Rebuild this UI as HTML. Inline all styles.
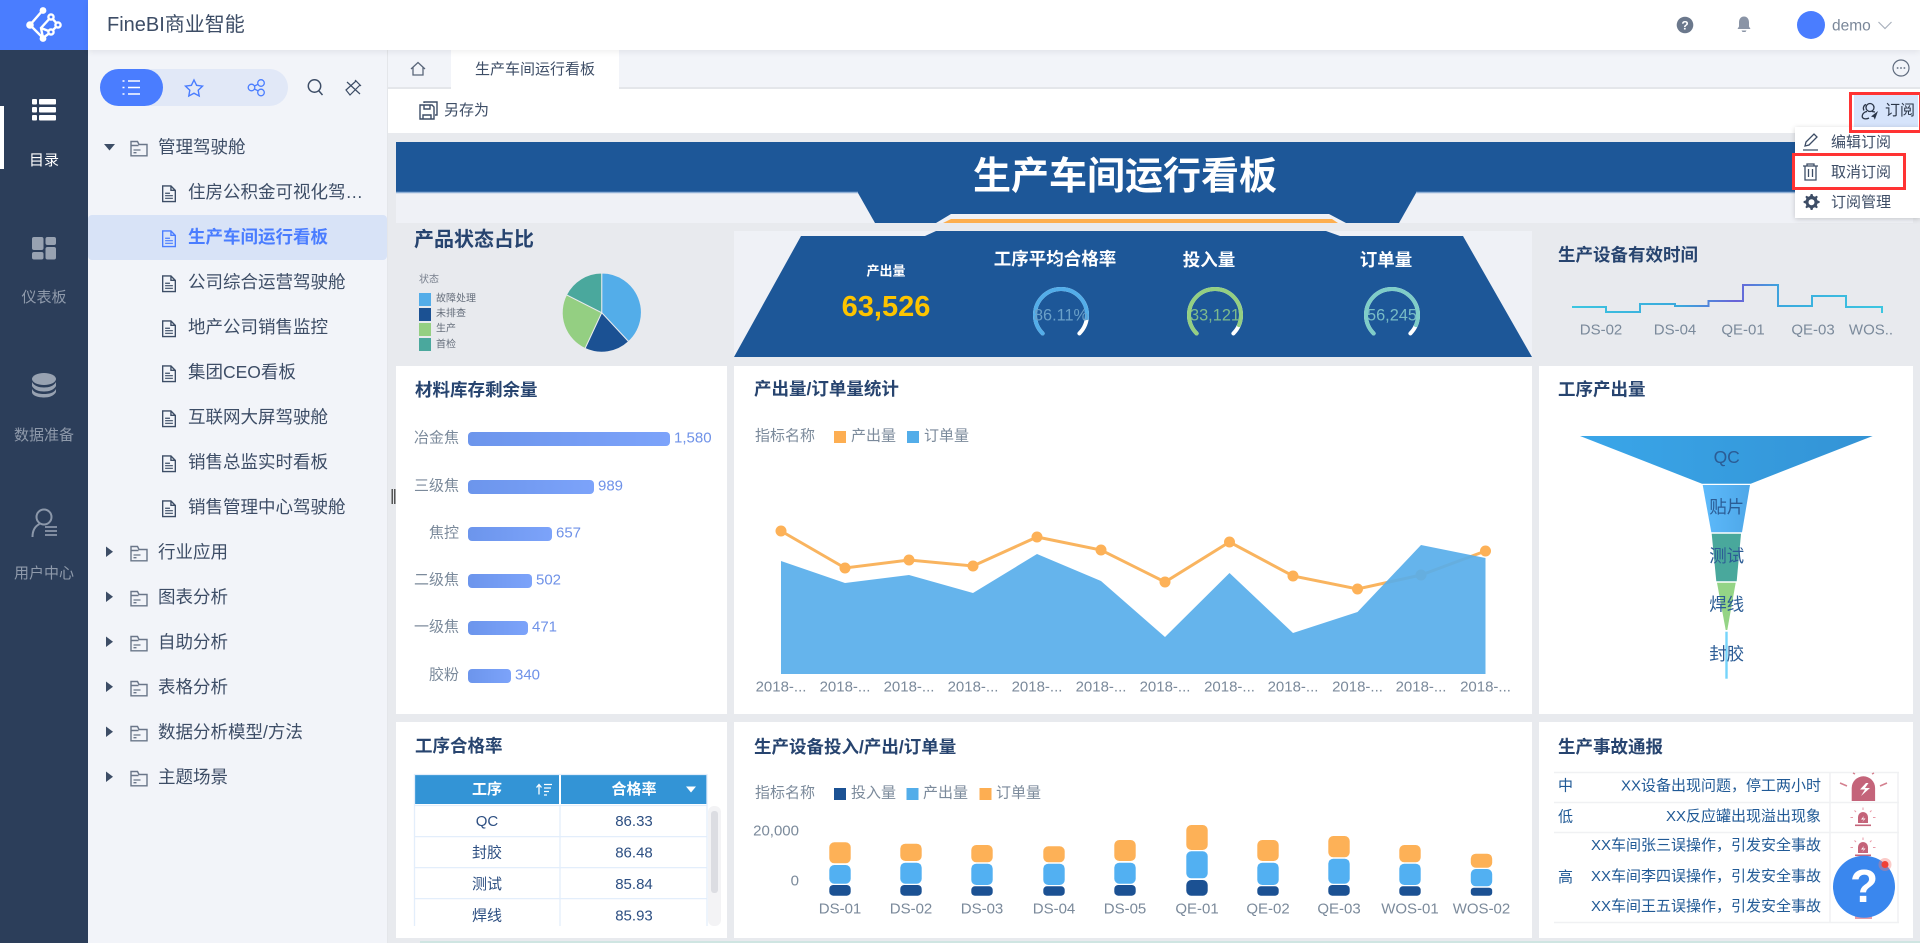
<!DOCTYPE html>
<html lang="zh-CN"><head><meta charset="utf-8"><title>FineBI商业智能</title>
<style>
*{box-sizing:border-box;margin:0;padding:0}
html,body{width:1920px;height:943px;overflow:hidden;background:#e8eaee;font-family:"Liberation Sans","Noto Sans CJK SC",sans-serif;color:#3d4d66}
.a{position:absolute}
.rail{left:0;top:0;width:88px;height:943px;background:#2c3e5a}
.logo{left:0;top:0;width:88px;height:50px;background:#4a7dff}
.rl{left:0;width:88px;text-align:center;font-size:15px;line-height:20px;color:#8f9aab;margin-top:1px}
.head{left:88px;top:0;width:1832px;height:50px;background:#fff;box-shadow:0 2px 6px rgba(0,0,0,.07);z-index:3}
.side{left:88px;top:50px;width:300px;height:893px;background:#f2f4f9;border-right:1px solid #e4e6ea}
.r{position:absolute;left:188px;height:45px;line-height:45px;font-size:17.5px;white-space:nowrap;color:#3d4d66}
.f{left:158px;margin-top:1px}
.tabs{left:388px;top:50px;width:1532px;height:39px;background:#f2f4f9;border-bottom:2px solid #e4e6ea}
.tab{left:451px;top:50px;width:168px;height:39px;background:#fff;text-align:center;line-height:40px;font-size:15px;color:#3d4d66}
.tool{left:388px;top:89px;width:1532px;height:44px;background:#fff}
.p{background:#fff}
.menu{left:1795px;top:127px;width:125px;height:91px;background:#fff;box-shadow:0 1px 5px rgba(0,0,0,.18);z-index:5}
.mi{position:absolute;left:1831px;font-size:15px;line-height:20px;color:#3d4d66;z-index:6;margin-top:1px}
text{dominant-baseline:central}
.t{font-size:17.5px;font-weight:700;fill:#27446f}
.g{font-size:15px;fill:#7b8a9b}
.v{font-size:15px;fill:#6f92e8}
.c{font-size:15px;fill:#2d4f82;text-anchor:middle}
.n{font-size:15px;fill:#215a96}
.e{text-anchor:end}.m{text-anchor:middle}
</style></head><body>

<div class="a rail"></div>
<div class="a logo"></div>
<svg class="a" style="left:0;top:0;z-index:2" width="88" height="50" viewBox="0 0 88 50">
<g fill="none" stroke="#fff" stroke-width="2.400"><path d="M43 10 30 25 43 38 51 32 58 25 51 17 41 28 43 38M41 28 51 32"/><circle cx="51" cy="17" r="2.600" fill="#4a7dff"/><circle cx="58" cy="25" r="2.600" fill="#4a7dff"/><circle cx="51" cy="32" r="2.600" fill="#4a7dff"/></g>
<g fill="#fff"><circle cx="43" cy="10.500" r="3.400"/><circle cx="30" cy="25" r="3.800"/><circle cx="43" cy="38.500" r="3.400"/></g></svg>
<div class="a" style="left:0;top:106px;width:4px;height:63px;background:#fff"></div>
<svg class="a" style="left:0;top:90px" width="88" height="460" viewBox="0 90 88 460">
<g fill="#fff"><rect x="32" y="99" width="5" height="5.500" rx="1"/><rect x="39" y="99" width="17" height="5.500" rx="1"/><rect x="32" y="107" width="5" height="5.500" rx="1"/><rect x="39" y="107" width="17" height="5.500" rx="1"/><rect x="32" y="115" width="5" height="5.500" rx="1"/><rect x="39" y="115" width="17" height="5.500" rx="1"/></g>
<g fill="#98a2b1"><rect x="32" y="237" width="11.500" height="13" rx="2"/><rect x="45.500" y="237" width="10.500" height="8" rx="2"/><rect x="32" y="252" width="11.500" height="7.500" rx="2"/><rect x="45.500" y="247" width="10.500" height="12.500" rx="2"/>
<ellipse cx="44" cy="379" rx="12" ry="6"/><path d="M32 382c2 4 7 5.500 12 5.500s10-1.500 12-5.500v4c-2 4-7 5.500-12 5.500s-10-1.500-12-5.500zM32 389c2 4 7 5 12 5s10-1 12-5v3c-2 4-7 5.500-12 5.500s-12-1.500-12-5.500z"/></g>
<g fill="none" stroke="#8c98aa" stroke-width="2"><circle cx="44" cy="517" r="7.500"/><path d="M32.500 537c0-7 3-11 7-13"/><path d="M45 527h12M45 531h12M45 535h12" stroke-width="1.800"/></g>
</svg>
<div class="a rl" style="top:150px;color:#fff">目录</div>
<div class="a rl" style="top:287px">仪表板</div>
<div class="a rl" style="top:425px">数据准备</div>
<div class="a rl" style="top:563px">用户中心</div>

<div class="a head"></div>
<div class="a" style="left:107px;top:10px;font-size:20px;line-height:30px;color:#3d4d66;z-index:4">FineBI商业智能</div>
<svg class="a" style="left:1660px;top:0;z-index:4" width="260" height="50" viewBox="1660 0 260 50">
<circle cx="1685" cy="25" r="8.300" fill="#6b788c"/><text x="1685" y="25.500" font-size="12" font-weight="700" fill="#fff" text-anchor="middle">?</text>
<path d="M1744 16.500c-3.500 0-5 3-5 6v4l-1.500 2.500h13L1749 26.500v-4c0-3-1.500-6-5-6zM1741.500 30.500h5l-1 1.500h-3z" fill="#8a94a6"/>
<circle cx="1811" cy="25" r="14" fill="#4a7dff"/>
<text x="1832" y="26" font-size="15.500" fill="#7a8799">demo</text>
<path d="M1878.500 22 1885 28.500 1891.500 22" fill="none" stroke="#a9b1bd" stroke-width="1.200"/></svg>

<div class="a side"></div>
<div class="a" style="left:100px;top:69px;width:188px;height:37px;border-radius:19px;background:#e1e8f7"></div>
<div class="a" style="left:100px;top:69px;width:63px;height:37px;border-radius:19px;background:#4a7dff"></div>
<svg class="a" style="left:100px;top:69px" width="270" height="37" viewBox="100 69 270 37">
<g fill="none" stroke="#fff" stroke-width="1.500"><path d="M128 81h12M128 87.500h12M128 94h12"/><path d="M122.500 81h2M122.500 87.500h2M122.500 94h2"/></g>
<path d="M194 80l2.600 5.300 5.900.8-4.300 4.100 1 5.800-5.200-2.800-5.200 2.800 1-5.800-4.300-4.100 5.900-.8z" fill="none" stroke="#4a7dff" stroke-width="1.400"/>
<g fill="none" stroke="#4a7dff" stroke-width="1.300"><circle cx="251.500" cy="87.500" r="3.300"/><circle cx="261" cy="83" r="3.300"/><circle cx="261" cy="92.500" r="3.300"/><path d="M254.500 86l3.500-1.700M254.500 89l3.500 1.800"/></g>
<g fill="none" stroke="#3d4d66" stroke-width="1.500"><circle cx="314.500" cy="86" r="6.200"/><path d="M319 91l3.500 4"/></g>
<g fill="none" stroke="#3d4d66" stroke-width="1.200"><path d="M346 90 356 81l4 4-10 10zM355 80l6 6M347 82l13 12"/></g>
</svg>

<svg width="0" height="0" style="position:absolute"><defs>
<symbol id="doc" viewBox="0 0 15 18"><path d="M1 1h8.500L14 5.500V17H1z M9.500 1v4.500H14" fill="none" stroke="currentColor" stroke-width="1.400"/><path d="M3.500 8.500h5M3.500 11h8M3.500 13.700h8" fill="none" stroke="currentColor" stroke-width="1.200"/></symbol>
<symbol id="fold" viewBox="0 0 18 17"><path d="M1 15.800V1.500h6.500l1.500 3h8v11.300z M1 5.500h7.500" fill="none" stroke="#6a7689" stroke-width="1.400"/><path d="M3.500 10h7M3.500 12.700h3" fill="none" stroke="#6a7689" stroke-width="1.300"/></symbol>
</defs></svg>

<div class="a" style="left:88px;top:215px;width:299px;height:45px;background:#d8e3f7;border-radius:4px"></div>
<svg class="a" style="left:100px;top:135px;color:#3d4d66" width="90" height="660" viewBox="100 135 90 660">
<path d="M104 144h11l-5.500 6.500z" fill="#3d4d66"/>
<g fill="#3d4d66"><path d="M106 546.500v10.500l7-5.200z"/><path d="M106 591.500v10.500l7-5.200z"/><path d="M106 636.500v10.500l7-5.200z"/><path d="M106 681.500v10.500l7-5.200z"/><path d="M106 726.500v10.500l7-5.200z"/><path d="M106 771.500v10.500l7-5.200z"/></g>
<use href="#fold" x="130" y="140" width="18" height="17"/><use href="#fold" x="130" y="545" width="18" height="17"/><use href="#fold" x="130" y="590" width="18" height="17"/><use href="#fold" x="130" y="635" width="18" height="17"/><use href="#fold" x="130" y="680" width="18" height="17"/><use href="#fold" x="130" y="725" width="18" height="17"/><use href="#fold" x="130" y="770" width="18" height="17"/>
<use href="#doc" x="161.500" y="185" width="15" height="17.500"/>
<use href="#doc" x="161.500" y="230" width="15" height="17.500" style="color:#4a7dff"/>
<use href="#doc" x="161.500" y="275" width="15" height="17.500"/>
<use href="#doc" x="161.500" y="320" width="15" height="17.500"/>
<use href="#doc" x="161.500" y="365" width="15" height="17.500"/>
<use href="#doc" x="161.500" y="410" width="15" height="17.500"/>
<use href="#doc" x="161.500" y="455" width="15" height="17.500"/>
<use href="#doc" x="161.500" y="500" width="15" height="17.500"/>
</svg>
<div class="r f" style="top:124px">管理驾驶舱</div>
<div class="r" style="top:170px">住房公积金可视化驾…</div>
<div class="r" style="top:215px;color:#4a7dff;font-weight:700">生产车间运行看板</div>
<div class="r" style="top:260px">公司综合运营驾驶舱</div>
<div class="r" style="top:305px">地产公司销售监控</div>
<div class="r" style="top:350px">集团CEO看板</div>
<div class="r" style="top:395px">互联网大屏驾驶舱</div>
<div class="r" style="top:440px">销售总监实时看板</div>
<div class="r" style="top:485px">销售管理中心驾驶舱</div>
<div class="r f" style="top:529px">行业应用</div>
<div class="r f" style="top:574px">图表分析</div>
<div class="r f" style="top:619px">自助分析</div>
<div class="r f" style="top:664px">表格分析</div>
<div class="r f" style="top:709px">数据分析模型/方法</div>
<div class="r f" style="top:754px">主题场景</div>

<div class="a tabs"></div>
<div class="a tab">生产车间运行看板</div>
<div class="a tool"></div>
<svg class="a" style="left:400px;top:55px" width="100" height="75" viewBox="400 55 100 75">
<path d="M411 69l7-6.500 7 6.500M413 67.500V75h10v-7.500" fill="none" stroke="#5a667a" stroke-width="1.300"/>
<path d="M424 103v-1h13v13h-2M420 105h12l2 2v12h-14zM424 105v4h6v-4M423 119v-4h8v4" fill="none" stroke="#3d4d66" stroke-width="1.400"/></svg>
<div class="a" style="left:444px;top:101px;font-size:15px;line-height:20px;color:#3d4d66">另存为</div>
<svg class="a" style="left:1890px;top:55px" width="24" height="26" viewBox="1890 55 24 26"><circle cx="1901" cy="68" r="8" fill="none" stroke="#5f6b7e" stroke-width="1.200"/><path d="M1896.800 68h1.600M1900.200 68h1.600M1903.600 68h1.600" stroke="#5f6b7e" stroke-width="1.600"/></svg>

<div class="a p" style="left:396px;top:366px;width:331px;height:348px"></div>
<div class="a p" style="left:734px;top:366px;width:798px;height:348px"></div>
<div class="a p" style="left:1539px;top:366px;width:374px;height:348px"></div>
<div class="a p" style="left:396px;top:722px;width:331px;height:216px"></div>
<div class="a p" style="left:734px;top:722px;width:798px;height:216px"></div>
<div class="a p" style="left:1539px;top:722px;width:374px;height:216px"></div>
<div class="a" style="left:420px;top:941px;width:1500px;height:2px;background:#cfe5e2"></div>

<svg class="a" style="left:0;top:0;font-family:'Liberation Sans','Noto Sans CJK SC',sans-serif" width="1920" height="943" viewBox="0 0 1920 943">
<defs>
<linearGradient id="bar"><stop offset="0" stop-color="#6c95ec"/><stop offset="1" stop-color="#7ca3fa"/></linearGradient>
<linearGradient id="step" gradientUnits="userSpaceOnUse" x1="1572" x2="1882" y1="0" y2="0"><stop offset="0" stop-color="#3cc6e0"/><stop offset=".35" stop-color="#3aa8dc"/><stop offset=".53" stop-color="#6a62d8"/><stop offset=".68" stop-color="#3aaade"/><stop offset="1" stop-color="#3cc6e0"/></linearGradient>
<linearGradient id="fq"><stop offset="0" stop-color="#3aa6e9"/><stop offset="1" stop-color="#3393d5"/></linearGradient>
<linearGradient id="fb"><stop offset="0" stop-color="#5dbafb"/><stop offset="1" stop-color="#4ea7e8"/></linearGradient>
<g id="alarm"><path d="M-5-2a5 5 0 0 1 10 0v6h-10z" fill="#c4647a"/><path d="M1-3-2 .5H1L-1 3.500 2.500-.5H0z" fill="#fff"/><rect x="-8" y="5.500" width="16" height="1.600" fill="#c4647a"/><path d="M-10-1.500h-2.500M10-1.500h2.500M-7-7l-1.500-1.500M7-7l1.500-1.500M0-9v-2.500" stroke="#e89aa8" fill="none"/></g>
</defs>

<!-- banner -->
<rect x="396" y="142" width="1517" height="51" fill="#1d5798"/>
<rect x="396" y="193" width="1517" height="30" fill="#eff1f6"/>
<path d="M396 192.500H858M1416 192.500H1913" stroke="#8fb0d6" stroke-width="1.500"/>
<path d="M858 193 875 223H1399L1416 193z" fill="#1d5798"/>
<path d="M936 223 951 214H1329L1346 223z" fill="#eff1f6"/>
<path d="M943 223 951 219H1332L1338 223z" fill="#fdae4e"/>
<text x="1125" y="177" font-size="38" font-weight="700" fill="#fff" text-anchor="middle">生产车间运行看板</text>

<!-- pie panel -->
<text x="414" y="240" font-size="20" font-weight="700" fill="#27446f">产品状态占比</text>
<text x="419" y="280" font-size="10" fill="#777f8c">状态</text>
<rect x="419" y="293" width="12" height="13" fill="#53ade9"/><rect x="419" y="308" width="12" height="13" fill="#1b5193"/><rect x="419" y="323" width="12" height="13" fill="#94cf82"/><rect x="419" y="338" width="12" height="13" fill="#4aa89d"/>
<g font-size="10" fill="#666f7c"><text x="436" y="299">故障处理</text><text x="436" y="314">未排查</text><text x="436" y="329">生产</text><text x="436" y="345">首检</text></g>
<g stroke="#e8eaee" stroke-width="1">
<path d="M601.700 312.700V273A39.500 39.500 0 0 1 628.600 341.600z" fill="#53ade9"/>
<path d="M601.700 312.700 628.600 341.600A39.500 39.500 0 0 1 585 348.500z" fill="#1b5193"/>
<path d="M601.700 312.700 585 348.500A39.500 39.500 0 0 1 566.500 294.800z" fill="#94cf82"/>
<path d="M601.700 312.700 566.500 294.800A39.500 39.500 0 0 1 601.700 273z" fill="#4aa89d"/></g>

<!-- KPI -->
<rect x="734" y="231" width="798" height="126" fill="#eff1f6"/>
<path d="M801 236H925L936 231H1326L1340 236H1463L1532 357H734z" fill="#1d5798"/>
<g fill="#fff" text-anchor="middle" font-weight="700">
<text x="886" y="271" font-size="13">产出量</text>
<text x="1055" y="259" font-size="17.500">工序平均合格率</text>
<text x="1209" y="260" font-size="17.500">投入量</text>
<text x="1386" y="260" font-size="17.500">订单量</text></g>
<text x="886" y="307" font-size="29" font-weight="700" fill="#fdc400" text-anchor="middle">63,526</text>
<g fill="none" stroke-width="4" stroke-linecap="round">
<path d="M1042.600 333.400A26 26 0 1 1 1079.400 333.400" stroke="#fff"/><path d="M1042.600 333.400A26 26 0 1 1 1079.400 333.400" stroke="#53ade9" pathLength="100" stroke-dasharray="86 100"/>
<path d="M1196.600 333.400A26 26 0 1 1 1233.400 333.400" stroke="#fff"/><path d="M1196.600 333.400A26 26 0 1 1 1233.400 333.400" stroke="#94cf82" pathLength="100" stroke-dasharray="92 100"/>
<path d="M1373.600 333.400A26 26 0 1 1 1410.400 333.400" stroke="#fff"/><path d="M1373.600 333.400A26 26 0 1 1 1410.400 333.400" stroke="#7fcdc8" pathLength="100" stroke-dasharray="92 100"/></g>
<g font-size="17" text-anchor="middle"><text x="1061" y="315" fill="#6aa0c8" textLength="54" lengthAdjust="spacingAndGlyphs">86.11%</text><text x="1215" y="315" fill="#7dba8c" textLength="50" lengthAdjust="spacingAndGlyphs">33,121</text><text x="1392" y="315" fill="#78bcc6" textLength="50" lengthAdjust="spacingAndGlyphs">56,245</text></g>

<!-- step -->
<text class="t" x="1558" y="255">生产设备有效时间</text>
<path d="M1572 307H1606V312H1640V304H1675V306H1708.500V301H1743V285H1778V306H1812V296H1846V307H1882V313" fill="none" stroke="url(#step)" stroke-width="2"/>
<g><text class="g m" x="1601" y="330">DS-02</text><text class="g m" x="1675" y="330">DS-04</text><text class="g m" x="1743" y="330">QE-01</text><text class="g m" x="1813" y="330">QE-03</text><text class="g m" x="1871" y="330">WOS..</text></g>

<!-- bars -->
<text class="t" x="415" y="390">材料库存剩余量</text>
<g fill="url(#bar)"><rect x="468" y="432" width="202" height="14" rx="4"/><rect x="468" y="480" width="126" height="14" rx="4"/><rect x="468" y="527" width="84" height="14" rx="4"/><rect x="468" y="574" width="64" height="14" rx="4"/><rect x="468" y="621" width="60" height="14" rx="4"/><rect x="468" y="669" width="43" height="14" rx="4"/></g>
<text class="g e" x="459" y="438">冶金焦</text><text class="g e" x="459" y="486">三级焦</text><text class="g e" x="459" y="533">焦控</text><text class="g e" x="459" y="580">二级焦</text><text class="g e" x="459" y="627">一级焦</text><text class="g e" x="459" y="675">胶粉</text>
<text class="v" x="674" y="438">1,580</text><text class="v" x="598" y="486">989</text><text class="v" x="556" y="533">657</text><text class="v" x="536" y="580">502</text><text class="v" x="532" y="627">471</text><text class="v" x="515" y="675">340</text>

<!-- line/area -->
<text class="t" x="754" y="389">产出量/订单量统计</text>
<text class="g" x="755" y="436">指标名称</text>
<rect x="834" y="431" width="12" height="12" fill="#fdae52"/><text class="g" x="851" y="436">产出量</text>
<rect x="907" y="431" width="12" height="12" fill="#53ade9"/><text class="g" x="924" y="436">订单量</text>
<path d="M781 531 845 568 909 560 973 566 1037 537 1101 550 1165 582 1229.500 542 1293 576 1357.500 589 1421 575 1485.500 551" fill="none" stroke="#f9b45f" stroke-width="3"/>
<g fill="#fdb157"><circle cx="781" cy="531" r="5.500"/><circle cx="845" cy="568" r="5.500"/><circle cx="909" cy="560" r="5.500"/><circle cx="973" cy="566" r="5.500"/><circle cx="1037" cy="537" r="5.500"/><circle cx="1101" cy="550" r="5.500"/><circle cx="1165" cy="582" r="5.500"/><circle cx="1229.500" cy="542" r="5.500"/><circle cx="1293" cy="576" r="5.500"/><circle cx="1357.500" cy="589" r="5.500"/><circle cx="1421" cy="575" r="5.500"/><circle cx="1485.500" cy="551" r="5.500"/></g>
<path d="M781 561 845 583 909 575 973 593 1037 554 1101 581 1165 637 1229.500 573 1293 633 1357.500 612 1421 545 1485.500 558V674H781z" fill="#58aeea" fill-opacity=".92"/>
<g><text class="g m" x="781" y="687">2018-...</text><text class="g m" x="845" y="687">2018-...</text><text class="g m" x="909" y="687">2018-...</text><text class="g m" x="973" y="687">2018-...</text><text class="g m" x="1037" y="687">2018-...</text><text class="g m" x="1101" y="687">2018-...</text><text class="g m" x="1165" y="687">2018-...</text><text class="g m" x="1229.500" y="687">2018-...</text><text class="g m" x="1293" y="687">2018-...</text><text class="g m" x="1357.500" y="687">2018-...</text><text class="g m" x="1421" y="687">2018-...</text><text class="g m" x="1485.500" y="687">2018-...</text></g>

<!-- funnel -->
<text class="t" x="1558" y="389.500">工序产出量</text>
<path d="M1580 436H1872.700L1750.700 483.700H1702z" fill="url(#fq)"/>
<path d="M1702.700 485H1750L1742 532.300H1711.300z" fill="url(#fb)"/>
<path d="M1711.700 533.700H1741L1736.700 581.300H1716.300z" fill="#49a89c"/>
<path d="M1717 582.700H1735.700L1727.300 630H1725.700z" fill="#94d486"/>
<path d="M1725.300 631.700H1727.700V678.700H1725.300z" fill="#75d4fb"/>
<g font-size="17.500" fill="#2b5c95" text-anchor="middle"><text x="1726.700" y="457">QC</text><text x="1726.700" y="507">贴片</text><text x="1726.700" y="556">测试</text><text x="1726.700" y="604.700">焊线</text><text x="1726.700" y="654">封胶</text></g>

<!-- table -->
<text class="t" x="415" y="746">工序合格率</text>
<rect x="415" y="775" width="144" height="29" fill="#3394d6"/><rect x="561" y="775" width="146" height="29" fill="#3394d6"/>
<g font-size="15" font-weight="700" fill="#fff" text-anchor="middle"><text x="487" y="789.500">工序</text><text x="634" y="789.500">合格率</text></g>
<path d="M539 784.500v10M536.500 787.500l2.500-3 2.500 3M544 784.500h8M544 788h7M544 791.500h5M544 795h3" stroke="#fff" stroke-width="1.300" fill="none"/>
<path d="M686 786.500h10l-5 6z" fill="#fff"/>
<g stroke="#e3eefb" stroke-width="1.300" fill="none"><path d="M414.500 774V926M560 805V926M707 774V926M414 774.500H707M414 805.500H707M414 836.600H707M414 867.600H707M414 898.600H707"/></g>
<text class="c" x="487" y="821.500">QC</text><text class="c" x="634" y="821.500">86.33</text>
<text class="c" x="487" y="853">封胶</text><text class="c" x="634" y="853">86.48</text>
<text class="c" x="487" y="884.500">测试</text><text class="c" x="634" y="884.500">85.84</text>
<text class="c" x="487" y="916">焊线</text><text class="c" x="634" y="916">85.93</text>
<rect x="708" y="806" width="13" height="120" rx="6" fill="#f3f3f5"/><rect x="711" y="811" width="7" height="82" rx="3" fill="#dcdde2"/>

<!-- stacked -->
<text class="t" x="754" y="747">生产设备投入/产出/订单量</text>
<text class="g" x="755" y="793">指标名称</text>
<rect x="834" y="788" width="12" height="12" fill="#1b5193"/><text class="g" x="851" y="793">投入量</text>
<rect x="906.500" y="788" width="12" height="12" fill="#53ade9"/><text class="g" x="923" y="793">产出量</text>
<rect x="979.500" y="788" width="12" height="12" fill="#fdae52"/><text class="g" x="996" y="793">订单量</text>
<text class="g e" x="799" y="831">20,000</text><text class="g e" x="799" y="881">0</text>
<g fill="#fdb157">
<rect x="829.300" y="842.300" width="21.400" height="21" rx="5"/><rect x="900.300" y="843.700" width="21.400" height="17.300" rx="5"/><rect x="971.300" y="845" width="21.400" height="17.300" rx="5"/><rect x="1043.300" y="846.300" width="21.400" height="16" rx="5"/><rect x="1114.300" y="840" width="21.400" height="21" rx="5"/><rect x="1186.300" y="825" width="21.400" height="25" rx="5"/><rect x="1257.300" y="840" width="21.400" height="21" rx="5"/><rect x="1328.300" y="836" width="21.400" height="21.300" rx="5"/><rect x="1399.300" y="845" width="21.400" height="17.300" rx="5"/><rect x="1470.800" y="853.700" width="21.400" height="14" rx="5"/></g>
<g fill="#52b0f2">
<rect x="829.300" y="865" width="21.400" height="18.700" rx="5"/><rect x="900.300" y="862.700" width="21.400" height="21" rx="5"/><rect x="971.300" y="863.700" width="21.400" height="21.300" rx="5"/><rect x="1043.300" y="863.700" width="21.400" height="21.300" rx="5"/><rect x="1114.300" y="862.700" width="21.400" height="21" rx="5"/><rect x="1186.300" y="851.300" width="21.400" height="27" rx="5"/><rect x="1257.300" y="862.700" width="21.400" height="22.300" rx="5"/><rect x="1328.300" y="858.700" width="21.400" height="25" rx="5"/><rect x="1399.300" y="863.700" width="21.400" height="21.300" rx="5"/><rect x="1470.800" y="869" width="21.400" height="17.300" rx="5"/></g>
<g fill="#1b5193">
<rect x="829.300" y="885" width="21.400" height="10.700" rx="4"/><rect x="900.300" y="885" width="21.400" height="10.700" rx="4"/><rect x="971.300" y="886.300" width="21.400" height="9.400" rx="3.500"/><rect x="1043.300" y="886.300" width="21.400" height="9.400" rx="3.500"/><rect x="1114.300" y="885" width="21.400" height="10.700" rx="4"/><rect x="1186.300" y="880" width="21.400" height="15.700" rx="5"/><rect x="1257.300" y="886.300" width="21.400" height="9.400" rx="3.500"/><rect x="1328.300" y="885" width="21.400" height="10.700" rx="4"/><rect x="1399.300" y="886.300" width="21.400" height="9.400" rx="3.500"/><rect x="1470.800" y="887.700" width="21.400" height="8" rx="3"/></g>
<text class="g m" x="840" y="909">DS-01</text><text class="g m" x="911" y="909">DS-02</text><text class="g m" x="982" y="909">DS-03</text><text class="g m" x="1054" y="909">DS-04</text><text class="g m" x="1125" y="909">DS-05</text><text class="g m" x="1197" y="909">QE-01</text><text class="g m" x="1268" y="909">QE-02</text><text class="g m" x="1339" y="909">QE-03</text><text class="g m" x="1410" y="909">WOS-01</text><text class="g m" x="1481.500" y="909">WOS-02</text>

<!-- incident -->
<text class="t" x="1558" y="747">生产事故通报</text>
<path d="M1554 772.500H1899M1554 802.500H1899M1554 832.500H1899M1554 922.500H1899M1830 772V922M1898 772V922" stroke="#f0f1f3" stroke-width="1.500" fill="none"/>
<text class="n" x="1558" y="786">中</text><text class="n" x="1558" y="817">低</text><text class="n" x="1558" y="877.700">高</text>
<text class="n e" x="1821" y="786">XX设备出现问题，停工两小时</text>
<text class="n e" x="1821" y="816.700">XX反应罐出现溢出现象</text>
<text class="n e" x="1821" y="845.700">XX车间张三误操作，引发安全事故</text>
<text class="n e" x="1821" y="876.700">XX车间李四误操作，引发安全事故</text>
<text class="n e" x="1821" y="906.700">XX车间王五误操作，引发安全事故</text>
<path d="M1851.700 801V788a11.700 11.700 0 0 1 23.400 0v13z" fill="#c4647a"/>
<path d="M1866 783l-6 6.500h5l-4 6.500 9-8h-5l3.500-5z" fill="#fff"/>
<path d="M1840 783l7 3M1887 783l-7 3M1853 773l2 1M1874 773l-2 1" stroke="#d4808f" stroke-width="1.500" fill="none"/>
<use href="#alarm" x="1863" y="819"/><use href="#alarm" x="1863" y="849"/>
<rect x="1855" y="915" width="17" height="4" fill="#e59aa5"/>
<circle cx="1864" cy="886.700" r="31" fill="#3a87ee"/>
<text x="1864" y="886" font-size="46" font-weight="700" fill="#fff" text-anchor="middle">?</text>
<circle cx="1885" cy="864.500" r="6.500" fill="#f47a74" fill-opacity=".4"/><circle cx="1885" cy="864.500" r="3.500" fill="#ef4136"/>

<!-- drag handle -->
<g fill="#555"><rect x="391.500" y="489" width="1.500" height="15"/><rect x="394" y="489" width="1.500" height="15"/></g>
</svg>

<!-- subscribe -->
<div class="a" style="left:1854px;top:95px;width:64px;height:32px;background:#d6e4fb"></div>
<div class="a" style="left:1849px;top:92px;width:71px;height:41px;border:3px solid #f33;border-right-width:1px;z-index:7"></div>
<svg class="a" style="left:1861px;top:102px" width="18" height="18" viewBox="0 0 18 18"><g fill="none" stroke="#2b3648" stroke-width="1.300"><circle cx="9" cy="5.500" r="4"/><path d="M5 2.500C3 3 1.500 6 3 8.500M6 9.500C2.500 10 .5 13 1.500 15.500 3 17.500 6 17 8 16M11 9.500l3 .5"/></g><path d="M17 9l-7 5.500 2.800.7 1 2.500z" fill="#2b3648"/></svg>
<div class="a" style="left:1885px;top:101px;font-size:15px;line-height:20px;color:#2b3648;z-index:6">订阅</div>

<!-- dropdown -->
<div class="a menu"></div>
<div class="mi" style="top:132px">编辑订阅</div>
<div class="mi" style="top:162px">取消订阅</div>
<div class="mi" style="top:192px">订阅管理</div>
<svg class="a" style="left:1795px;top:127px;z-index:6" width="125" height="91" viewBox="1795 127 125 91">
<g fill="none" stroke="#3d4d66" stroke-width="1.300"><path d="M1805 146l1-4 8-8 3 3-8 8zM1803 150h15"/>
<path d="M1803 166h15M1807 166v-2h7v2M1805 166v14h11v-14M1808.500 169v8M1812.500 169v8"/></g>
<path d="M1811 194l1.500 0 .6 2 1.800.8 1.800-1 1.100 1.100-1 1.800.8 1.800 2 .6v1.800l-2 .6-.8 1.800 1 1.800-1.100 1.100-1.800-1-1.800.8-.6 2h-1.800l-.6-2-1.800-.8-1.800 1-1.100-1.100 1-1.800-.8-1.800-2-.6v-1.800l2-.6.8-1.800-1-1.800 1.100-1.100 1.800 1 1.800-.8.6-2z" fill="#3d4d66"/><circle cx="1811.500" cy="202.200" r="3" fill="#fff"/></svg>
<div class="a" style="left:1792px;top:153px;width:114px;height:37px;border:3px solid #f33;z-index:7"></div>

</body></html>
